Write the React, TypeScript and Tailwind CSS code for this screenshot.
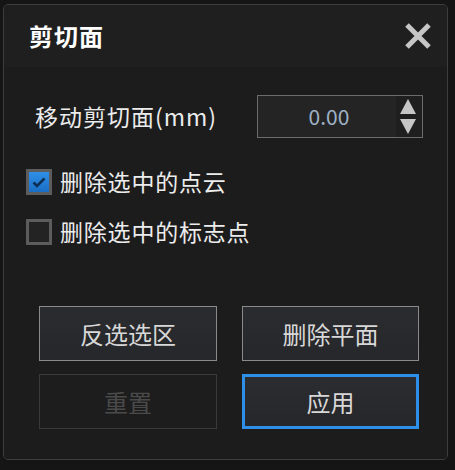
import React, { useState } from "react";

const font = { fontFamily: '"Noto Sans CJK SC", "Noto Sans", sans-serif' };

function Checkbox({ checked, label, onToggle }: { checked: boolean; label: string; onToggle: () => void }) {
  return (
    <button onClick={onToggle} className="flex items-center gap-[8px] text-left">
      <span
        className={`w-[26px] h-[26px] border-[3px] border-[#5c5c5c] flex items-center justify-center ${
          checked ? "bg-gradient-to-b from-[#2f8fe8] to-[#1a6ec4]" : "bg-[#232323]"
        }`}
      >
        {checked && (
          <svg width="16" height="16" viewBox="0 0 16 16">
            <path d="M2.5 8.5 L6 12 L13.5 4.5" fill="none" stroke="#0d2f55" strokeWidth="2.6" />
          </svg>
        )}
      </span>
      <span className="text-[23px] leading-none tracking-[0.8px] text-[#ececec] -mt-[2px]">{label}</span>
    </button>
  );
}

export default function App() {
  const [delCloud, setDelCloud] = useState(true);
  const [delMarks, setDelMarks] = useState(false);

  return (
    <div className="w-[455px] h-[470px] bg-[#151515] pt-[4px] pl-[3px]" style={font}>
      <div className="w-[445px] h-[456px] rounded-[5px] border border-[#3d3d3d] bg-[#1b1b1b] flex flex-col overflow-hidden">
        <div className="h-[62px] bg-[#1f1f1f] flex items-center justify-between pl-[25px] pr-[15px]">
          <span className="text-[24px] font-bold text-white leading-none tracking-[1px]">剪切面</span>
          <svg width="28" height="28" viewBox="0 0 28 28">
            <path d="M3 3 L25 25 M25 3 L3 25" stroke="#c6c6c6" strokeWidth="5" />
          </svg>
        </div>

        <div className="flex-1 bg-[#1c1c1c] flex flex-col">
          <div className="flex items-center justify-between pl-[31px] pr-[24px] mt-[28px]">
            <span className="text-[23px] text-[#ececec] leading-none tracking-[1px]">移动剪切面(mm)</span>
            <div className="w-[166px] h-[43px] border border-[#6c6c6c] bg-[#242424] flex">
              <span className="flex-1 flex items-center justify-center text-[21px] text-[#9fb2c6] pl-[4px]">0.00</span>
              <div className="w-[26px] bg-[#1f1f1f] flex flex-col items-center justify-center gap-[5px] pr-[2px]">
                <svg width="16" height="15" viewBox="0 0 16 15">
                  <path d="M8 0 L16 15 L0 15 Z" fill="#c6c6c6" />
                </svg>
                <svg width="16" height="15" viewBox="0 0 16 15">
                  <path d="M0 0 L16 0 L8 15 Z" fill="#c6c6c6" />
                </svg>
              </div>
            </div>
          </div>

          <div className="flex flex-col gap-[24px] pl-[22px] mt-[31px]">
            <Checkbox checked={delCloud} label="删除选中的点云" onToggle={() => setDelCloud(!delCloud)} />
            <Checkbox checked={delMarks} label="删除选中的标志点" onToggle={() => setDelMarks(!delMarks)} />
          </div>

          <div className="grid grid-cols-[178px_177px] gap-x-[25px] gap-y-[13px] pl-[35px] mt-[61px]">
            <button className="h-[55px] border border-[#8a8a8a] bg-gradient-to-b from-[#2b2c2f] to-[#26272a] text-[24px] text-[#d8d8d8]">
              反选选区
            </button>
            <button className="h-[55px] border border-[#8a8a8a] bg-gradient-to-b from-[#2b2c2f] to-[#26272a] text-[24px] text-[#d8d8d8]">
              删除平面
            </button>
            <button disabled className="h-[55px] border border-[#3a3a3a] bg-[#1d1d1d] text-[24px] text-[#4a4a4a]">
              重置
            </button>
            <button className="h-[55px] border-[3px] border-[#2e8fe9] bg-gradient-to-b from-[#2c2d30] to-[#26272a] text-[24px] text-[#d8d8d8]">
              应用
            </button>
          </div>
        </div>
      </div>
    </div>
  );
}
